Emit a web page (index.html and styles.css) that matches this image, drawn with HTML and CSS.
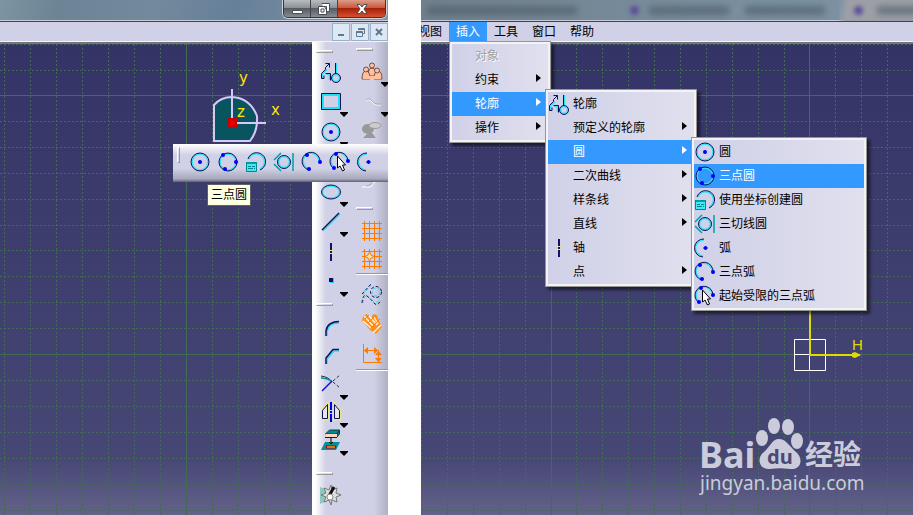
FILE: index.html
```html
<!DOCTYPE html>
<html lang="zh-CN">
<head>
<meta charset="utf-8">
<title>草图编辑器</title>
<link rel="stylesheet" href="styles.css">
</head>
<body>
<svg class="sprite" aria-hidden="true">
  <symbol id="circle" viewBox="0 0 22 22"><circle cx="11" cy="11" r="8" class="c"/><circle cx="11" cy="11" r="9" class="n"/><circle cx="11" cy="11" r="2" class="dot"/></symbol>
  <symbol id="circle3" viewBox="0 0 22 22"><circle cx="11" cy="11" r="8" class="c"/><circle cx="11" cy="11" r="9" class="n"/><circle cx="6" cy="4" r="2" class="dot"/><circle cx="19" cy="11" r="2" class="dot"/><circle cx="8" cy="18" r="2" class="dot"/></symbol>
  <symbol id="coord" viewBox="0 0 22 22"><path class="c" d="M4 8A8 8 0 1 1 15 18"/><path class="n" d="M3 8A9 9 0 1 1 15 19"/><path fill="#00a0a8" d="M1 11h11v2h-11z"/><path fill="#40e8f8" d="M1 13h11v8h-11z"/><path stroke="#008890" fill="none" d="M1.500 11.500v9h10v-9M3 15.500h3M7 15.500h3M3 17.500h5M9 17.500h1M8 11v1M10 11v1"/></symbol>
  <symbol id="tangent" viewBox="0 0 22 22"><circle cx="11" cy="11" r="5.500" class="c"/><circle cx="11" cy="11" r="6.500" class="n"/><path class="t" d="M8 2L1 9M1 13L8 20M20 2V20"/></symbol>
  <symbol id="arc" viewBox="0 0 22 22"><path class="c" d="M10 3A8 8 0 0 0 9 19"/><path class="n" d="M10 2A9 9 0 0 0 9 20"/><path stroke="#00f" stroke-width="2" d="M11.500 9V13M9.500 11H13.500"/></symbol>
  <symbol id="arc3" viewBox="0 0 22 22"><path class="c" d="M8 18A8 8 0 1 1 18 11"/><path class="n" d="M8 19A9 9 0 1 1 19 11"/><circle cx="6" cy="4" r="2" class="dot"/><circle cx="19" cy="11" r="2" class="dot"/><circle cx="8" cy="18" r="2" class="dot"/></symbol>
  <symbol id="arclimit" viewBox="0 0 22 22"><path class="c" d="M5 16A8 8 0 1 1 18 11"/><path class="n" d="M4 17A9 9 0 1 1 19 11"/><circle cx="7" cy="3" r="2" class="dot"/><circle cx="19" cy="10" r="2" class="dot"/><circle cx="5" cy="17" r="2" class="dot"/><path fill="#fff" stroke="#000" d="M8.500 5V17L11 15L13.500 20L15.500 19L13.500 14H16.500Z"/></symbol>
  <symbol id="profile" viewBox="0 0 22 22"><path class="c" d="M2.500 17V13L7 8.500M6.500 13.500H9.500V19M16.500 2V13"/><path class="n" d="M1.500 17.500V12.500L5.500 8.500V6.500L9.500 2.500M5.500 2.500H9.500V6.500M5.500 12.500H10.500V19.500M1.500 17.500H4V14.500M15.500 2V13"/><circle cx="16" cy="17" r="3.500" class="c"/><circle cx="16" cy="17" r="4.500" class="n"/></symbol>
  <symbol id="axis" viewBox="0 0 22 22"><path stroke="#101060" d="M10.500 2V9M10.500 13V20"/><path stroke="#00f" d="M11.500 2V9M11.500 13V20"/><path stroke="#101060" stroke-width="2" d="M11 10V12"/><path stroke="#e8e880" d="M9 9.500H13M9 12.500H13"/></symbol>
  <symbol id="drop" viewBox="0 0 8 5"><path d="M0 0H8V1L4 5L0 1Z"/></symbol>
  <symbol id="mesh" viewBox="0 0 22 22"><path class="o" d="M1 3.500H21M1 8.500H21M1 13.500H21M1 18.500H21M3.500 1V21M8.500 1V21M13.500 1V21M18.500 1V21"/></symbol>
</svg>

<div class="screens">
<main class="window">
  <header class="titlebar">
    <div class="window-buttons">
      <button aria-label="最小化"><svg viewBox="0 0 12 12"><path d="M1.500 7.500H11.500V10.500H1.500Z"/></svg></button>
      <button aria-label="还原"><svg viewBox="0 0 12 12"><path d="M3.500 .5H11.500V8.500H9M.5 3.500H8.500V11.500H.5Z"/><path d="M3 6H6V9H3Z"/></svg></button>
      <button class="close" aria-label="关闭"><svg viewBox="0 0 12 12"><path d="M1 1.500H4L6 4L8 1.500H11L8 6L11 10.500H8L6 8L4 10.500H1L4 6Z"/></svg></button>
    </div>
  </header>
  <div class="menubar mdi">
    <button aria-label="最小化文档"><svg viewBox="0 0 10 10"><path d="M2 8H8"/></svg></button>
    <button aria-label="还原文档"><svg viewBox="0 0 10 10"><path class="fine" d="M3.500 3V1.500H9.500V6.500H8M1.500 4.500H7.500V9.500H1.500ZM1.500 5.500H7M3.500 2.500H9"/></svg></button>
    <button aria-label="关闭文档"><svg viewBox="0 0 10 10"><path d="M2 2L8 8M8 2L2 8"/></svg></button>
  </div>
  <div class="workspace">
    <section class="canvas" aria-label="草图">
      <svg class="fill" aria-hidden="true">
        <path class="dash" d="M0 .5H900M0 26.500H900M0 77.500H900M0 103.500H900M0 129.500H900M0 155.500H900M0 181.500H900M0 206.500H900M0 232.500H900M0 258.500H900M0 284.500H900M0 336.500H900M0 362.500H900M0 388.500H900M0 414.500H900M0 440.500H900M0 466.500H900"/>
        <path class="dash" d="M4.500 0V900M30.500 0V900M56.500 0V900M82.500 0V900M108.500 0V900M134.500 0V900M160.500 0V900M212.500 0V900M238.500 0V900M264.500 0V900M290.500 0V900"/>
        <path class="solid" d="M0 51.500H900M0 310.500H900M186.500 0V900"/>
      </svg>
      <svg class="compass" viewBox="0 0 80 80">
        <path d="M6 71V35Q13 27 24 27Q42 28 49 46Q50 61 42 71Z" fill="#085560" stroke="#d8c8f8" stroke-width="2"/>
        <path d="M24 19V50M28 53H58" stroke="#d8c8f8" stroke-width="2"/>
        <path d="M20 48H29V57H20Z" fill="#c80000"/><path d="M22 50H27V55H22Z" fill="#e80000"/>
        <text x="31" y="13">y</text><text x="29" y="47">z</text><text x="63" y="45">x</text>
      </svg>
    </section>
    <aside class="toolbars">
      <div class="toolbar">
        <span class="grip"></span>
        <button aria-label="轮廓"><svg class="ico"><use href="#profile"/></svg></button>
        <button aria-label="矩形"><svg class="ico" viewBox="0 0 22 22"><path fill="none" stroke="#20e0f8" stroke-width="2" d="M3 4H19V17H3Z"/><path fill="none" stroke="#101058" d="M1.500 2.500H20.500V18.500H1.500Z"/></svg><svg class="drop"><use href="#drop"/></svg></button>
        <button aria-label="圆"><svg class="ico"><use href="#circle"/></svg><svg class="drop"><use href="#drop"/></svg></button>
        <button aria-label="样条线"></button>
        <button aria-label="椭圆"><svg class="ico" viewBox="0 0 22 22"><ellipse cx="11" cy="11" rx="8.500" ry="6" class="c"/><ellipse cx="11" cy="11" rx="9.500" ry="7" class="n"/></svg><svg class="drop"><use href="#drop"/></svg></button>
        <button aria-label="直线"><svg class="ico" viewBox="0 0 22 22"><path class="c" d="M3 20L20 3"/><path stroke="#101058" stroke-width="1.500" d="M2 19L19 2"/></svg><svg class="drop"><use href="#drop"/></svg></button>
        <button aria-label="轴"><svg class="ico"><use href="#axis"/></svg></button>
        <button aria-label="点"><svg class="ico" viewBox="0 0 22 22"><path fill="#20d0f0" d="M10 7H14V12H10Z"/><path fill="#101058" d="M9 7H13V11H9Z"/></svg><svg class="drop"><use href="#drop"/></svg></button>
        <span class="grip"></span>
        <div class="group">
        <button aria-label="圆角"><svg class="ico" viewBox="0 0 22 22"><path d="M7 19V15Q8 6 19 6" fill="none" stroke="#20e0f8" stroke-width="1.500"/><path d="M6 19V14Q7 5 19 4.500" fill="none" stroke="#101058" stroke-width="1.500"/></svg></button>
        <button aria-label="倒角"><svg class="ico" viewBox="0 0 22 22"><path d="M7 19V14L14 6H19" fill="none" stroke="#20e0f8" stroke-width="1.500"/><path d="M6 19V13L13 4.500H19" fill="none" stroke="#101058" stroke-width="1.500"/></svg></button>
        <button aria-label="修剪"><svg class="ico" viewBox="0 0 22 22"><path d="M1 3Q9 4 12 9" fill="none" stroke="#183840"/><path d="M1 5Q8 5 12 9" fill="none" stroke="#089098" stroke-width="1.500"/><path d="M2 18L12 8" stroke="#1010c8" stroke-width="1.500"/><path d="M13 8L20 2M13 9L20 15" fill="none" stroke="#303058" stroke-dasharray="3 2"/></svg><svg class="drop"><use href="#drop"/></svg></button>
        <button aria-label="镜像"><svg class="ico" viewBox="0 0 22 22"><path d="M2 18.500V9L8 2V18.500ZM20 18.500V9L14 2V18.500Z" fill="#e4e4ee" stroke="#e8e888" stroke-width="2"/><path d="M2.500 17.500V9.500L7.500 3.500V17.500ZM19.500 17.500V9.500L14.500 3.500V17.500Z" fill="none" stroke="#101058"/><path d="M11 1V21" stroke="#0000f0" stroke-width="2" stroke-dasharray="8 1 2 1"/></svg><svg class="drop"><use href="#drop"/></svg></button>
        <button aria-label="投影"><svg class="ico" viewBox="0 0 22 22"><path d="M5.500 5L9.500 1H19.500L17 5ZM17 5L19.500 1V5L17 8Z" fill="#008890" stroke="#203848"/><path d="M6 5H17V8H6Z" fill="#ffd8c0"/><path d="M5 8.500H17" stroke="#0000d0"/><path d="M5 13H20L16 21H1Z" fill="#0090a0"/><path d="M11 9V15M9 13L11 15L13 13" fill="none" stroke="#000"/><path d="M6 18H16" stroke="#b00000" stroke-width="3"/><path d="M7 18H15" stroke="#ffe820"/></svg><svg class="drop"><use href="#drop"/></svg></button>
        </div>
        <span class="grip far"></span>
        <button aria-label="约束"><svg class="ico" viewBox="0 0 22 22"><path d="M0 3L22 11L0 20Z" fill="#90c8c0"/><path d="M11 1L12 6L17 4L16 9L21 11L16 13L17 18L12 16L11 21L9 16L4 18L6 13L1 11L6 9L4 4L9 6Z" fill="#dedee0" stroke="#777"/><path d="M9 12L14 3" stroke="#101018" stroke-width="3"/><circle cx="10" cy="13" r="3" fill="#fff" stroke="#888"/></svg></button>
      </div>
      <div class="toolbar second">
        <span class="grip"></span>
        <button aria-label="用户"><svg class="ico" viewBox="0 0 22 22"><g fill="#ffc0a0" stroke="#402020" stroke-width=".7"><path d="M7 15Q7 7 11 7Q15 7 15 15Z"/><circle cx="11" cy="4.500" r="2.500"/><path d="M1 18Q1 10 5 10Q9 10 9 18ZM13 18Q13 10 17 10Q21 10 21 18Z"/><circle cx="5" cy="8.500" r="2.500"/><circle cx="16" cy="9.500" r="2.500"/></g><path d="M2 15H20V18H2Z" fill="#ffc0a0"/></svg><svg class="drop"><use href="#drop"/></svg></button>
        <button aria-label="曲线" disabled><svg class="ico" viewBox="0 0 22 22"><path d="M5 10Q8 7 11 11T20 14" fill="none" stroke="#fff"/><path d="M5 9Q8 6 11 10T20 13" fill="none" stroke="#aaa"/></svg><svg class="drop"><use href="#drop"/></svg></button>
        <button aria-label="工作台" disabled><svg class="ico" viewBox="0 0 22 22"><ellipse cx="7" cy="8" rx="6" ry="5" fill="#999"/><ellipse cx="14" cy="4.500" rx="6" ry="3" fill="#ccc" stroke="#999"/><path d="M7 12H11L15 17H2Z" fill="#999"/></svg></button>
        <button aria-label="选项"></button>
        <button aria-label="曲线编辑" disabled><svg class="ico" viewBox="0 0 22 22"><path d="M1 6H8Q12 6 12 1H15" fill="none" stroke="#fff"/><path d="M5 5Q11 4 12 0" fill="none" stroke="#aaa"/></svg></button>
        <span class="grip"></span>
        <div class="group">
        <button aria-label="网格"><svg class="ico"><use href="#mesh"/></svg></button>
        <button aria-label="捕捉网格"><svg class="ico" viewBox="0 0 22 22"><use href="#mesh" width="22" height="22"/><path d="M8.500 4L10 7L13 8.500L10 10L8.500 13L7 10L4 8.500L7 7Z" fill="#ffe8b0" stroke="#ff7800"/></svg></button>
        </div>
        <span class="rule"></span>
        <button aria-label="构造元素"><svg class="ico" viewBox="0 0 22 22"><g fill="none" stroke="#18e0f8" stroke-dasharray="3 2"><circle cx="15" cy="9" r="4"/><path d="M2 20Q3 11 7 14T13 19T19 16M2 12L10 2"/></g><g fill="none" stroke="#101058" stroke-dasharray="3 2"><circle cx="15" cy="9" r="5.500"/><path d="M1 20Q2 10 6 13T13 20T20 17M1 11L10 1"/></g></svg></button>
        <button aria-label="几何约束"><svg class="ico" viewBox="0 0 22 22"><path d="M2 3L6 1L10 6L12 1L16 2L18 8L21 14L15 21L9 17L4 11L1 8Z" fill="#ff9020"/><path d="M3 3L12 13M8 3L16 12M2 8L10 15M13 4L17 11M12 20L20 12" stroke="#fff0d8" stroke-width="1.500"/><path d="M4 6L8 2M7 10L15 2M10 15L19 6" stroke="#ff7800"/></svg></button>
        <button aria-label="尺寸约束"><svg class="ico" viewBox="0 0 22 22"><path class="o" d="M2.500 1V19.500H21M17.500 7V19M3 7.500H17"/><path fill="#ff7800" d="M3 7.500L7 4V11ZM17 7.500L13 4V11ZM17.500 8L14 12H21ZM17.500 19L14 15H21Z"/></svg></button>
        <span class="rule"></span>
      </div>
    </aside>
  </div>
  <div class="flyout">
    <span class="grip-v"></span>
    <button aria-label="圆"><svg class="ico"><use href="#circle"/></svg></button>
    <button aria-label="三点圆" aria-describedby="tip"><svg class="ico"><use href="#circle3"/></svg></button>
    <button aria-label="使用坐标创建圆"><svg class="ico"><use href="#coord"/></svg></button>
    <button aria-label="三切线圆"><svg class="ico"><use href="#tangent"/></svg></button>
    <button aria-label="三点弧"><svg class="ico"><use href="#arc3"/></svg></button>
    <button aria-label="起始受限的三点弧"><svg class="ico"><use href="#arclimit"/></svg></button>
    <button aria-label="弧"><svg class="ico"><use href="#arc"/></svg></button>
  </div>
  <div class="tooltip" id="tip" role="tooltip">三点圆</div>
</main>

<section class="window">
  <header class="titlebar tabs">
    <span class="smear one"></span><span class="spot"></span><span class="smear two"></span><span class="smear three"></span>
    <span class="tab"><span class="spot"></span><span class="smear"></span></span>
  </header>
  <nav class="menubar">
    <div class="entry"><button>视图</button></div>
    <div class="entry active"><button>插入</button>
      <ul class="menu first">
        <li><button disabled>对象</button></li>
        <li class="more"><button>约束</button></li>
        <li class="more active"><button>轮廓</button>
          <ul class="menu second-level">
            <li><button><svg class="ico"><use href="#profile"/></svg>轮廓</button></li>
            <li class="more"><button>预定义的轮廓</button></li>
            <li class="more active"><button>圆</button>
              <ul class="menu third-level">
                <li><button><svg class="ico"><use href="#circle"/></svg>圆</button></li>
                <li class="active"><button><svg class="ico"><use href="#circle3"/></svg>三点圆</button></li>
                <li><button><svg class="ico"><use href="#coord"/></svg>使用坐标创建圆</button></li>
                <li><button><svg class="ico"><use href="#tangent"/></svg>三切线圆</button></li>
                <li><button><svg class="ico"><use href="#arc"/></svg>弧</button></li>
                <li><button><svg class="ico"><use href="#arc3"/></svg>三点弧</button></li>
                <li><button><svg class="ico"><use href="#arclimit"/></svg>起始受限的三点弧</button></li>
              </ul>
            </li>
            <li class="more"><button>二次曲线</button></li>
            <li class="more"><button>样条线</button></li>
            <li class="more"><button>直线</button></li>
            <li><button><svg class="ico"><use href="#axis"/></svg>轴</button></li>
            <li class="more"><button>点</button></li>
          </ul>
        </li>
        <li class="more"><button>操作</button></li>
      </ul>
    </div>
    <div class="entry"><button>工具</button></div>
    <div class="entry"><button>窗口</button></div>
    <div class="entry"><button>帮助</button></div>
  </nav>
  <div class="workspace">
    <section class="canvas" aria-label="草图">
      <svg class="fill" aria-hidden="true">
        <path class="dash" d="M0 .5H900M0 26.500H900M0 77.500H900M0 103.500H900M0 129.500H900M0 155.500H900M0 181.500H900M0 206.500H900M0 232.500H900M0 258.500H900M0 284.500H900M0 336.500H900M0 362.500H900M0 388.500H900M0 414.500H900M0 440.500H900M0 466.500H900"/>
        <path class="dash" d="M.5 0V900M26.500 0V900M52.500 0V900M78.500 0V900M104.500 0V900M155.500 0V900M181.500 0V900M207.500 0V900M233.500 0V900M259.500 0V900M285.500 0V900M311.500 0V900M337.500 0V900M363.500 0V900M414.500 0V900M440.500 0V900M466.500 0V900"/>
        <path class="solid" d="M0 51.500H900M0 310.500H900M130.500 0V900M388.500 0V900"/>
      </svg>
      <svg class="origin" viewBox="0 0 80 70">
        <path d="M4.500 29.500H35.500V60.500H4.500ZM4 44.500H19.500V60" fill="none" stroke="#fff"/>
        <path d="M20 0V45H70" fill="none" stroke="#dcdc00" stroke-width="2"/><path d="M62 43L65 42L71 45L65 48L62 47Z" fill="#dcdc00"/>
        <text x="62" y="40">H</text>
      </svg>
      <svg class="brand" viewBox="0 0 170 86" role="img" aria-label="Baidu 经验">
        <text x="0" y="52" class="word">Bai</text>
        <g><ellipse cx="63" cy="22" rx="6" ry="8"/><ellipse cx="75" cy="10" rx="6" ry="8"/><ellipse cx="89" cy="11" rx="6" ry="8"/><ellipse cx="98" cy="25" rx="6" ry="8"/><path d="M80 23C73 23 71 31 65 36C57 42 60 54 71 53C78 52 84 52 91 53C102 54 105 43 97 36C91 31 87 23 80 23Z"/></g>
        <text x="68" y="48" class="du">du</text>
        <text x="106" y="49" class="cn">经验</text>
        <text x="1" y="74" class="url">jingyan.baidu.com</text>
      </svg>
    </section>
  </div>
</section>
</div>
</body>
</html>
```
FILE: styles.css
```css
* { box-sizing: border-box; }
body { margin: 0; background: #fff; font: 12px/16px "Liberation Sans", "Noto Sans CJK SC", sans-serif; color: #000; overflow: hidden; }
button { font: inherit; color: inherit; border: 0; padding: 0; margin: 0; background: none; display: flex; align-items: center; }
ul { list-style: none; margin: 0; padding: 0; }
.sprite { position: absolute; width: 0; height: 0; }
.n, .c, .t, .o { fill: none; stroke: #101058; }
.c { stroke: #30e0f8; stroke-width: 1.5px; }
.t { stroke: #00a0a8; stroke-width: 1.5px; }
.o { stroke: #ff7800; }
.dot { fill: #00f; }
.ico { width: 22px; height: 22px; flex: none; display: block; }

.screens { display: grid; grid-template-columns: 388fr 492fr; column-gap: 33px; min-height: 100vh; }
.window { position: relative; display: flex; flex-direction: column; min-width: 0; overflow: hidden; }
.titlebar { height: 22px; border-bottom: 1px solid #404450; box-shadow: inset 0 -1px #c8ccd8; background: linear-gradient(100deg, #7d94a2, #6d8496 15%, #73899c 40%, #66809a 60%, #8496a0); display: flex; justify-content: flex-end; }
.window-buttons { display: flex; height: 18px; margin-right: 2px; border: 1px solid #34383e; border-top: 0; border-radius: 0 0 5px 5px; overflow: hidden; box-shadow: 0 0 0 1px #ced4da; }
.window-buttons button { width: 27px; justify-content: center; border-right: 1px solid #444; background: linear-gradient(#b8bcc0, #8c9298 45%, #555c64 50%, #848c94); }
.window-buttons .close { width: 47px; border: 0; background: linear-gradient(#dc9c88, #c95840 45%, #a82008 50%, #d65030); }
.window-buttons svg { width: 12px; height: 12px; fill: #fff; fill-rule: evenodd; stroke: #4c4c54; }
.menubar { height: 20px; background: #d0d0e6; border-bottom: 1px solid #f4f4f4; display: flex; }
.mdi { justify-content: flex-end; gap: 1px; padding-top: 1px; }
.mdi button { width: 18px; height: 18px; justify-content: center; border: 1px solid #9cb0c8; background: #dce8f4; }
.mdi svg { width: 10px; height: 10px; fill: none; stroke: #607890; stroke-width: 2px; }
.mdi .fine { stroke-width: 1px; }

.workspace { display: flex; flex: 1; min-height: 473px; }
.canvas { position: relative; flex: 1; min-width: 0; overflow: hidden; border-top: 2px solid #74747c; background: linear-gradient(#333366, #3e3e6e 45%, #474776 88%, #636289); }
.fill { position: absolute; inset: 0; width: 100%; height: 100%; }
.dash { stroke: #426b55; stroke-dasharray: 2 2; }
.solid { stroke: #426b55; }
.compass { position: absolute; left: 208px; top: 26px; width: 80px; height: 80px; }
.compass text { fill: #ffe600; font: 15px "DejaVu Sans", sans-serif; }
.toolbars { display: flex; width: 76px; background: linear-gradient(90deg, #fff 0 3px, #d0d0e6 14px 62px, #b0b0c4); }
.toolbar { display: flex; flex-direction: column; width: 44px; padding: 8px 0 0 4px; }
.toolbar > button, .group > button { position: relative; width: 30px; height: 30px; justify-content: center; flex: none; }
.grip { width: 17px; height: 3px; margin-bottom: 4px; border: 1px solid #fff; border-right-color: #999; border-bottom-color: #999; flex: none; }
.toolbar > button + .grip { margin: 6px 0 8px; }
.group > button { height: 28px; }
.toolbar > .far { margin: 18px 0 5px; }
.drop { position: absolute; left: 24px; top: 25px; width: 8px; height: 5px; }
.second { width: 32px; padding: 6px 0 0; }
.second > button, .second .group { margin-left: 1px; }
.second > .grip + button { margin-top: 2px; }
.second > button + .grip { margin: 0 0 7px; }
.rule { height: 2px; margin: 0 0 4px; background: linear-gradient(#999 50%, #fff 50%); flex: none; }

.flyout { position: absolute; right: 0; top: 144px; width: 215px; height: 38px; padding: 3px 4px 0; display: flex; gap: 6px; overflow: hidden; background: linear-gradient(#fff, #d0d0e6 30%, #d0d0e6 65%, #a8a8bc 92%, #606070); }
.flyout button { height: 30px; flex: none; }
.grip-v { width: 3px; height: 16px; margin-right: 3px; border: 1px solid #fff; border-right-color: #999; border-bottom-color: #999; flex: none; }
.tooltip { position: absolute; right: 137px; top: 184px; padding: 2px 3px; border: 1px solid #606060; background: #ffffe1; white-space: nowrap; }

.tabs { position: relative; align-items: center; justify-content: flex-start; overflow: hidden; background: linear-gradient(90deg, #70808c, #778c9c 50%, #7d94a6); }
.smear { height: 9px; background: #4c5a66; opacity: .6; filter: blur(3px); flex: none; }
.one { width: 150px; margin-left: 6px; }
.two { width: 80px; margin-left: 10px; }
.three { width: 80px; margin-left: 16px; }
.spot { width: 9px; height: 9px; margin-left: 53px; border-radius: 50%; background: #5c4c98; filter: blur(2px); flex: none; }
.tab { display: flex; align-items: center; gap: 14px; flex: 1; height: 22px; margin-left: 14px; background: linear-gradient(100deg, transparent, #9ca0a6 10px); }
.tab .spot { margin-left: 15px; }
.tab .smear { width: 60px; }

.menubar .entry { position: relative; flex: none; }
.entry:first-child { margin-left: -10px; }
.entry > button { height: 19px; padding: 0 7px; }
.entry.active > button { background: #3399ff; color: #fff; }
.menu { position: absolute; z-index: 2; padding: 2px; border: 1px solid #969696; background: linear-gradient(90deg, #d0d0e8, #e0e0ee) content-box, #f3f3f3; box-shadow: 3px 3px 3px rgba(0, 0, 0, .55); }
.menu li { position: relative; }
.menu button { position: relative; width: 100%; height: 24px; padding-left: 25px; white-space: nowrap; }
.menu.first > li > button { padding-left: 23px; }
.menu .ico { position: absolute; left: 0; top: 1px; }
.menu .active > button { background: #3399ff; color: #fff; }
.menu button:disabled { color: #a0a0a0; text-shadow: 1px 1px #fff; }
.menu .more > button::after { content: ""; position: absolute; right: 7px; top: 6px; border: 4px solid transparent; border-left: 5px solid; border-right: 0; }
.first { left: 0; top: 19px; width: 102px; }
.second-level, .third-level { left: calc(100% - 3px); top: -3px; width: 152px; }
.third-level { width: 176px; }
.origin { position: absolute; left: 369px; top: 266px; width: 80px; height: 70px; }
.origin text { fill: #dcdc00; font: 15px "Liberation Sans", sans-serif; }
.brand { position: absolute; right: 44px; bottom: 13px; width: 170px; height: 86px; fill: #cbcbdb; }
.word { font: bold 36px "Noto Sans", sans-serif; }
.du { font: bold 20px "Noto Sans", sans-serif; fill: #4a4978; }
.cn { font: bold 28px "Noto Sans CJK SC", sans-serif; }
.url { font: 19px "Noto Sans", sans-serif; }
```
